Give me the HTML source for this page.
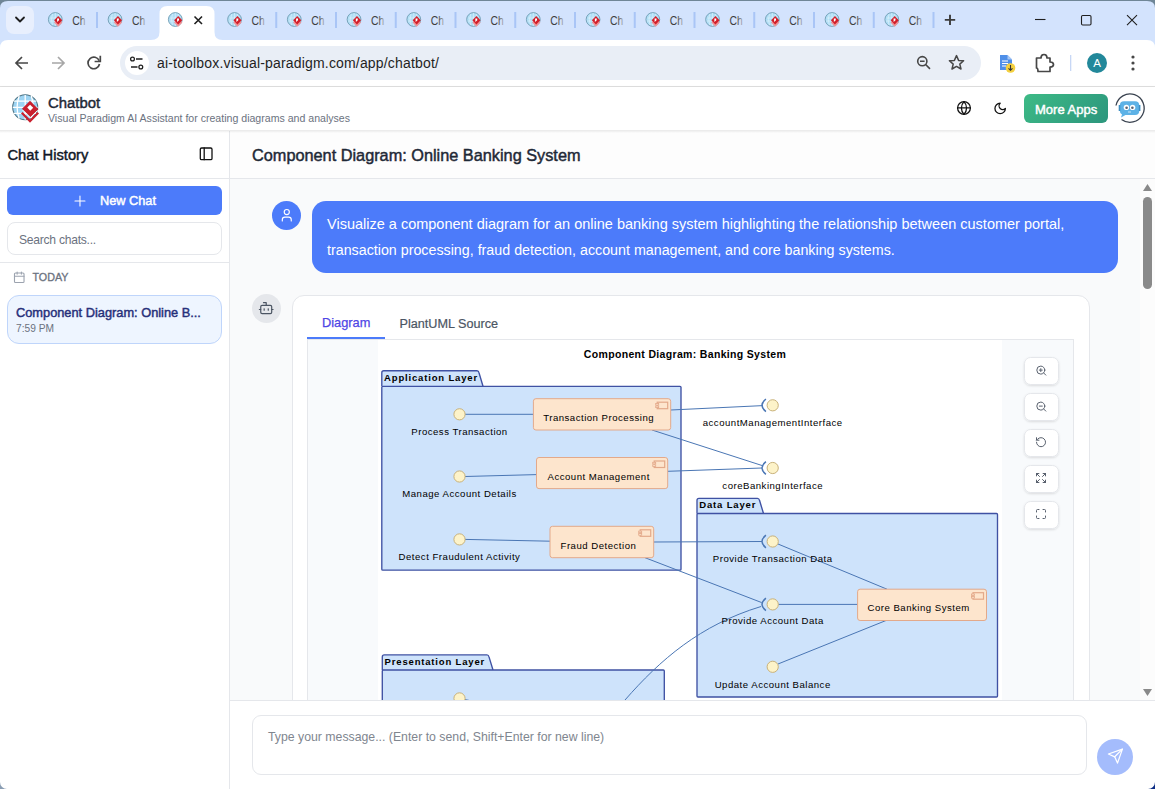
<!DOCTYPE html>
<html><head><meta charset="utf-8">
<style>
*{box-sizing:border-box;margin:0;padding:0}
html,body{width:1155px;height:789px;overflow:hidden;background:#fff;font-family:"Liberation Sans",sans-serif;position:relative}
.a{position:absolute}
.t{position:absolute;white-space:nowrap;line-height:1}
.sb{font-weight:normal;-webkit-text-stroke:0.45px currentColor}
</style></head><body>

<!-- ===== TAB STRIP ===== -->
<!-- CHROME START -->
<svg width="0" height="0" style="position:absolute"><defs>
<symbol id="fav" viewBox="0 0 16 16">
<circle cx="7.3" cy="7.5" r="6.9" fill="#b0def6" stroke="#6f9cb2" stroke-width="0.9"/>
<path d="M2 6 H12.5 M1.5 9 H12 M7.3 1 V14 M4.5 2 Q2.5 7.5 4.5 13 M10 2 Q12 7.5 10 13" stroke="#e3f4fc" stroke-width="0.6" fill="none"/>
<polygon points="10.2,6.4 14.4,10.6 10.2,14.8 6,10.6" fill="#ee9397"/>
<polygon points="10.2,4 14.3,8.2 10.2,12.4 6.1,8.2" fill="#d21f2b"/>
<path d="M9.1 6.6 L11 6.6 L11 8.2 L9.1 10 Z" fill="#fff"/>
</symbol>
<linearGradient id="fadeTxt" x1="0" x2="1" y1="0" y2="0"><stop offset="0.55" stop-color="#3d3d3d"/><stop offset="1" stop-color="#3d3d3d" stop-opacity="0.25"/></linearGradient>
</defs></svg>
<svg class="a" style="left:0;top:0" width="1155" height="40" viewBox="0 0 1155 40">
<rect x="0" y="0" width="1155" height="40" fill="#d3e3fd"/>
<path d="M0 0 H1155 V8 Q1155 1 1147 1 H8 Q0 1 0 8 Z" fill="#6f8697"/>
<rect x="6" y="6" width="28" height="28" rx="8" fill="#e8effd"/>
<path d="M16 17.5 L20 21.5 L24 17.5" fill="none" stroke="#1f1f1f" stroke-width="1.8" stroke-linecap="round" stroke-linejoin="round"/>
<path d="M151 40 Q159.5 40 159.5 32 V14 Q159.5 6 167.5 6 H206.5 Q214.5 6 214.5 14 V32 Q214.5 40 222.5 40 Z" fill="#fff"/>
<g transform="translate(48.00 12)"><circle cx="7.3" cy="7.5" r="6.9" fill="#b0def6" stroke="#6f9cb2" stroke-width="0.9"/>
<path d="M2 6 H12.5 M1.5 9 H12 M7.3 1 V14 M4.5 2 Q2.5 7.5 4.5 13 M10 2 Q12 7.5 10 13" stroke="#e3f4fc" stroke-width="0.6" fill="none"/>
<polygon points="10.2,6.4 14.4,10.6 10.2,14.8 6,10.6" fill="#ee9397"/>
<polygon points="10.2,4 14.3,8.2 10.2,12.4 6.1,8.2" fill="#d21f2b"/>
<path d="M9.1 6.6 L11 6.6 L11 8.2 L9.1 10 Z" fill="#fff"/></g>
<text x="72.30" y="24.8" font-size="12" textLength="13.3" lengthAdjust="spacingAndGlyphs" fill="url(#fadeTxt)" font-family="Liberation Sans">Ch</text>
<rect x="96.00" y="12" width="2" height="16" fill="#a9c5f6"/>
<g transform="translate(107.75 12)"><circle cx="7.3" cy="7.5" r="6.9" fill="#b0def6" stroke="#6f9cb2" stroke-width="0.9"/>
<path d="M2 6 H12.5 M1.5 9 H12 M7.3 1 V14 M4.5 2 Q2.5 7.5 4.5 13 M10 2 Q12 7.5 10 13" stroke="#e3f4fc" stroke-width="0.6" fill="none"/>
<polygon points="10.2,6.4 14.4,10.6 10.2,14.8 6,10.6" fill="#ee9397"/>
<polygon points="10.2,4 14.3,8.2 10.2,12.4 6.1,8.2" fill="#d21f2b"/>
<path d="M9.1 6.6 L11 6.6 L11 8.2 L9.1 10 Z" fill="#fff"/></g>
<text x="132.05" y="24.8" font-size="12" textLength="13.3" lengthAdjust="spacingAndGlyphs" fill="url(#fadeTxt)" font-family="Liberation Sans">Ch</text>
<g transform="translate(168 12)"><circle cx="7.3" cy="7.5" r="6.9" fill="#b0def6" stroke="#6f9cb2" stroke-width="0.9"/>
<path d="M2 6 H12.5 M1.5 9 H12 M7.3 1 V14 M4.5 2 Q2.5 7.5 4.5 13 M10 2 Q12 7.5 10 13" stroke="#e3f4fc" stroke-width="0.6" fill="none"/>
<polygon points="10.2,6.4 14.4,10.6 10.2,14.8 6,10.6" fill="#ee9397"/>
<polygon points="10.2,4 14.3,8.2 10.2,12.4 6.1,8.2" fill="#d21f2b"/>
<path d="M9.1 6.6 L11 6.6 L11 8.2 L9.1 10 Z" fill="#fff"/></g>
<path d="M194.5 16.5 L202 24 M202 16.5 L194.5 24" stroke="#1f1f1f" stroke-width="1.6"/>
<g transform="translate(227.25 12)"><circle cx="7.3" cy="7.5" r="6.9" fill="#b0def6" stroke="#6f9cb2" stroke-width="0.9"/>
<path d="M2 6 H12.5 M1.5 9 H12 M7.3 1 V14 M4.5 2 Q2.5 7.5 4.5 13 M10 2 Q12 7.5 10 13" stroke="#e3f4fc" stroke-width="0.6" fill="none"/>
<polygon points="10.2,6.4 14.4,10.6 10.2,14.8 6,10.6" fill="#ee9397"/>
<polygon points="10.2,4 14.3,8.2 10.2,12.4 6.1,8.2" fill="#d21f2b"/>
<path d="M9.1 6.6 L11 6.6 L11 8.2 L9.1 10 Z" fill="#fff"/></g>
<text x="251.55" y="24.8" font-size="12" textLength="13.3" lengthAdjust="spacingAndGlyphs" fill="url(#fadeTxt)" font-family="Liberation Sans">Ch</text>
<rect x="275.25" y="12" width="2" height="16" fill="#a9c5f6"/>
<g transform="translate(287.00 12)"><circle cx="7.3" cy="7.5" r="6.9" fill="#b0def6" stroke="#6f9cb2" stroke-width="0.9"/>
<path d="M2 6 H12.5 M1.5 9 H12 M7.3 1 V14 M4.5 2 Q2.5 7.5 4.5 13 M10 2 Q12 7.5 10 13" stroke="#e3f4fc" stroke-width="0.6" fill="none"/>
<polygon points="10.2,6.4 14.4,10.6 10.2,14.8 6,10.6" fill="#ee9397"/>
<polygon points="10.2,4 14.3,8.2 10.2,12.4 6.1,8.2" fill="#d21f2b"/>
<path d="M9.1 6.6 L11 6.6 L11 8.2 L9.1 10 Z" fill="#fff"/></g>
<text x="311.30" y="24.8" font-size="12" textLength="13.3" lengthAdjust="spacingAndGlyphs" fill="url(#fadeTxt)" font-family="Liberation Sans">Ch</text>
<rect x="335.00" y="12" width="2" height="16" fill="#a9c5f6"/>
<g transform="translate(346.75 12)"><circle cx="7.3" cy="7.5" r="6.9" fill="#b0def6" stroke="#6f9cb2" stroke-width="0.9"/>
<path d="M2 6 H12.5 M1.5 9 H12 M7.3 1 V14 M4.5 2 Q2.5 7.5 4.5 13 M10 2 Q12 7.5 10 13" stroke="#e3f4fc" stroke-width="0.6" fill="none"/>
<polygon points="10.2,6.4 14.4,10.6 10.2,14.8 6,10.6" fill="#ee9397"/>
<polygon points="10.2,4 14.3,8.2 10.2,12.4 6.1,8.2" fill="#d21f2b"/>
<path d="M9.1 6.6 L11 6.6 L11 8.2 L9.1 10 Z" fill="#fff"/></g>
<text x="371.05" y="24.8" font-size="12" textLength="13.3" lengthAdjust="spacingAndGlyphs" fill="url(#fadeTxt)" font-family="Liberation Sans">Ch</text>
<rect x="394.75" y="12" width="2" height="16" fill="#a9c5f6"/>
<g transform="translate(406.50 12)"><circle cx="7.3" cy="7.5" r="6.9" fill="#b0def6" stroke="#6f9cb2" stroke-width="0.9"/>
<path d="M2 6 H12.5 M1.5 9 H12 M7.3 1 V14 M4.5 2 Q2.5 7.5 4.5 13 M10 2 Q12 7.5 10 13" stroke="#e3f4fc" stroke-width="0.6" fill="none"/>
<polygon points="10.2,6.4 14.4,10.6 10.2,14.8 6,10.6" fill="#ee9397"/>
<polygon points="10.2,4 14.3,8.2 10.2,12.4 6.1,8.2" fill="#d21f2b"/>
<path d="M9.1 6.6 L11 6.6 L11 8.2 L9.1 10 Z" fill="#fff"/></g>
<text x="430.80" y="24.8" font-size="12" textLength="13.3" lengthAdjust="spacingAndGlyphs" fill="url(#fadeTxt)" font-family="Liberation Sans">Ch</text>
<rect x="454.50" y="12" width="2" height="16" fill="#a9c5f6"/>
<g transform="translate(466.25 12)"><circle cx="7.3" cy="7.5" r="6.9" fill="#b0def6" stroke="#6f9cb2" stroke-width="0.9"/>
<path d="M2 6 H12.5 M1.5 9 H12 M7.3 1 V14 M4.5 2 Q2.5 7.5 4.5 13 M10 2 Q12 7.5 10 13" stroke="#e3f4fc" stroke-width="0.6" fill="none"/>
<polygon points="10.2,6.4 14.4,10.6 10.2,14.8 6,10.6" fill="#ee9397"/>
<polygon points="10.2,4 14.3,8.2 10.2,12.4 6.1,8.2" fill="#d21f2b"/>
<path d="M9.1 6.6 L11 6.6 L11 8.2 L9.1 10 Z" fill="#fff"/></g>
<text x="490.55" y="24.8" font-size="12" textLength="13.3" lengthAdjust="spacingAndGlyphs" fill="url(#fadeTxt)" font-family="Liberation Sans">Ch</text>
<rect x="514.25" y="12" width="2" height="16" fill="#a9c5f6"/>
<g transform="translate(526.00 12)"><circle cx="7.3" cy="7.5" r="6.9" fill="#b0def6" stroke="#6f9cb2" stroke-width="0.9"/>
<path d="M2 6 H12.5 M1.5 9 H12 M7.3 1 V14 M4.5 2 Q2.5 7.5 4.5 13 M10 2 Q12 7.5 10 13" stroke="#e3f4fc" stroke-width="0.6" fill="none"/>
<polygon points="10.2,6.4 14.4,10.6 10.2,14.8 6,10.6" fill="#ee9397"/>
<polygon points="10.2,4 14.3,8.2 10.2,12.4 6.1,8.2" fill="#d21f2b"/>
<path d="M9.1 6.6 L11 6.6 L11 8.2 L9.1 10 Z" fill="#fff"/></g>
<text x="550.30" y="24.8" font-size="12" textLength="13.3" lengthAdjust="spacingAndGlyphs" fill="url(#fadeTxt)" font-family="Liberation Sans">Ch</text>
<rect x="574.00" y="12" width="2" height="16" fill="#a9c5f6"/>
<g transform="translate(585.75 12)"><circle cx="7.3" cy="7.5" r="6.9" fill="#b0def6" stroke="#6f9cb2" stroke-width="0.9"/>
<path d="M2 6 H12.5 M1.5 9 H12 M7.3 1 V14 M4.5 2 Q2.5 7.5 4.5 13 M10 2 Q12 7.5 10 13" stroke="#e3f4fc" stroke-width="0.6" fill="none"/>
<polygon points="10.2,6.4 14.4,10.6 10.2,14.8 6,10.6" fill="#ee9397"/>
<polygon points="10.2,4 14.3,8.2 10.2,12.4 6.1,8.2" fill="#d21f2b"/>
<path d="M9.1 6.6 L11 6.6 L11 8.2 L9.1 10 Z" fill="#fff"/></g>
<text x="610.05" y="24.8" font-size="12" textLength="13.3" lengthAdjust="spacingAndGlyphs" fill="url(#fadeTxt)" font-family="Liberation Sans">Ch</text>
<rect x="633.75" y="12" width="2" height="16" fill="#a9c5f6"/>
<g transform="translate(645.50 12)"><circle cx="7.3" cy="7.5" r="6.9" fill="#b0def6" stroke="#6f9cb2" stroke-width="0.9"/>
<path d="M2 6 H12.5 M1.5 9 H12 M7.3 1 V14 M4.5 2 Q2.5 7.5 4.5 13 M10 2 Q12 7.5 10 13" stroke="#e3f4fc" stroke-width="0.6" fill="none"/>
<polygon points="10.2,6.4 14.4,10.6 10.2,14.8 6,10.6" fill="#ee9397"/>
<polygon points="10.2,4 14.3,8.2 10.2,12.4 6.1,8.2" fill="#d21f2b"/>
<path d="M9.1 6.6 L11 6.6 L11 8.2 L9.1 10 Z" fill="#fff"/></g>
<text x="669.80" y="24.8" font-size="12" textLength="13.3" lengthAdjust="spacingAndGlyphs" fill="url(#fadeTxt)" font-family="Liberation Sans">Ch</text>
<rect x="693.50" y="12" width="2" height="16" fill="#a9c5f6"/>
<g transform="translate(705.25 12)"><circle cx="7.3" cy="7.5" r="6.9" fill="#b0def6" stroke="#6f9cb2" stroke-width="0.9"/>
<path d="M2 6 H12.5 M1.5 9 H12 M7.3 1 V14 M4.5 2 Q2.5 7.5 4.5 13 M10 2 Q12 7.5 10 13" stroke="#e3f4fc" stroke-width="0.6" fill="none"/>
<polygon points="10.2,6.4 14.4,10.6 10.2,14.8 6,10.6" fill="#ee9397"/>
<polygon points="10.2,4 14.3,8.2 10.2,12.4 6.1,8.2" fill="#d21f2b"/>
<path d="M9.1 6.6 L11 6.6 L11 8.2 L9.1 10 Z" fill="#fff"/></g>
<text x="729.55" y="24.8" font-size="12" textLength="13.3" lengthAdjust="spacingAndGlyphs" fill="url(#fadeTxt)" font-family="Liberation Sans">Ch</text>
<rect x="753.25" y="12" width="2" height="16" fill="#a9c5f6"/>
<g transform="translate(765.00 12)"><circle cx="7.3" cy="7.5" r="6.9" fill="#b0def6" stroke="#6f9cb2" stroke-width="0.9"/>
<path d="M2 6 H12.5 M1.5 9 H12 M7.3 1 V14 M4.5 2 Q2.5 7.5 4.5 13 M10 2 Q12 7.5 10 13" stroke="#e3f4fc" stroke-width="0.6" fill="none"/>
<polygon points="10.2,6.4 14.4,10.6 10.2,14.8 6,10.6" fill="#ee9397"/>
<polygon points="10.2,4 14.3,8.2 10.2,12.4 6.1,8.2" fill="#d21f2b"/>
<path d="M9.1 6.6 L11 6.6 L11 8.2 L9.1 10 Z" fill="#fff"/></g>
<text x="789.30" y="24.8" font-size="12" textLength="13.3" lengthAdjust="spacingAndGlyphs" fill="url(#fadeTxt)" font-family="Liberation Sans">Ch</text>
<rect x="813.00" y="12" width="2" height="16" fill="#a9c5f6"/>
<g transform="translate(824.75 12)"><circle cx="7.3" cy="7.5" r="6.9" fill="#b0def6" stroke="#6f9cb2" stroke-width="0.9"/>
<path d="M2 6 H12.5 M1.5 9 H12 M7.3 1 V14 M4.5 2 Q2.5 7.5 4.5 13 M10 2 Q12 7.5 10 13" stroke="#e3f4fc" stroke-width="0.6" fill="none"/>
<polygon points="10.2,6.4 14.4,10.6 10.2,14.8 6,10.6" fill="#ee9397"/>
<polygon points="10.2,4 14.3,8.2 10.2,12.4 6.1,8.2" fill="#d21f2b"/>
<path d="M9.1 6.6 L11 6.6 L11 8.2 L9.1 10 Z" fill="#fff"/></g>
<text x="849.05" y="24.8" font-size="12" textLength="13.3" lengthAdjust="spacingAndGlyphs" fill="url(#fadeTxt)" font-family="Liberation Sans">Ch</text>
<rect x="872.75" y="12" width="2" height="16" fill="#a9c5f6"/>
<g transform="translate(884.50 12)"><circle cx="7.3" cy="7.5" r="6.9" fill="#b0def6" stroke="#6f9cb2" stroke-width="0.9"/>
<path d="M2 6 H12.5 M1.5 9 H12 M7.3 1 V14 M4.5 2 Q2.5 7.5 4.5 13 M10 2 Q12 7.5 10 13" stroke="#e3f4fc" stroke-width="0.6" fill="none"/>
<polygon points="10.2,6.4 14.4,10.6 10.2,14.8 6,10.6" fill="#ee9397"/>
<polygon points="10.2,4 14.3,8.2 10.2,12.4 6.1,8.2" fill="#d21f2b"/>
<path d="M9.1 6.6 L11 6.6 L11 8.2 L9.1 10 Z" fill="#fff"/></g>
<text x="908.80" y="24.8" font-size="12" textLength="13.3" lengthAdjust="spacingAndGlyphs" fill="url(#fadeTxt)" font-family="Liberation Sans">Ch</text>
<rect x="932.50" y="12" width="2" height="16" fill="#a9c5f6"/>
<path d="M950 14.8 V25 M944.8 19.9 H955.2" stroke="#3c3c3c" stroke-width="1.9"/>
<path d="M1035 19.5 H1045.5" stroke="#1f1f1f" stroke-width="1.1"/>
<rect x="1081.5" y="15.5" width="9.5" height="9.5" rx="1.2" fill="none" stroke="#1f1f1f" stroke-width="1.1"/>
<path d="M1127 15.2 L1137 25.2 M1137 15.2 L1127 25.2" stroke="#1f1f1f" stroke-width="1.1"/>
</svg>
<svg class="a" style="left:0;top:40px" width="1155" height="47" viewBox="0 40 1155 47">
<rect x="0" y="40" width="1155" height="10" fill="#d3e3fd"/>
<path d="M0 87 V48 Q0 40 8 40 H1147 Q1155 40 1155 48 V87 Z" fill="#fff"/>
<rect x="0" y="86" width="1155" height="1" fill="#e1e1e1"/>
<path d="M28 63 H16.5 M22 57 L16 63 L22 69" fill="none" stroke="#474747" stroke-width="1.7"/>
<path d="M52 63 H63.5 M58 57 L64 63 L58 69" fill="none" stroke="#a7a7a7" stroke-width="1.7"/>
<path d="M99.2 60.8 A5.8 5.8 0 1 0 99.5 64" fill="none" stroke="#474747" stroke-width="1.7"/><path d="M100.3 55.8 V61.5 H94.6" fill="none" stroke="#474747" stroke-width="1.7"/>
<rect x="120" y="46" width="861" height="34" rx="17" fill="#e9eef6"/>
<circle cx="137" cy="63" r="12" fill="#fff"/>
<circle cx="132.5" cy="59" r="1.9" fill="none" stroke="#1f1f1f" stroke-width="1.3"/><path d="M136 59 H142.5 M131 67 H137.5" stroke="#1f1f1f" stroke-width="1.4"/><circle cx="140.8" cy="67" r="1.9" fill="none" stroke="#1f1f1f" stroke-width="1.3"/>
<circle cx="922.3" cy="61.2" r="4.6" fill="none" stroke="#474747" stroke-width="1.6"/><path d="M920 61.2 H924.6 M925.6 64.5 L930 68.9" stroke="#474747" stroke-width="1.6"/>
<path d="M956.5 55.6 L958.6 60.4 L963.6 60.8 L959.8 64.1 L961 69 L956.5 66.4 L952 69 L953.2 64.1 L949.4 60.8 L954.4 60.4 Z" fill="none" stroke="#474747" stroke-width="1.5" stroke-linejoin="round"/>
<path d="M1000 55 H1007.5 L1012 59.5 V70 H1000 Z" fill="#4f8fe8"/><path d="M1007.5 55 V59.5 H1012 Z" fill="#a8c8f5"/><path d="M1002 61 H1008 M1002 63.5 H1008 M1002 66 H1006" stroke="#fff" stroke-width="1"/><circle cx="1010.5" cy="68" r="4.8" fill="#f4d03f"/><path d="M1010.5 65 V70 M1008.5 68.3 L1010.5 70.3 L1012.5 68.3" fill="none" stroke="#333" stroke-width="1.1"/>
<path d="M1036.5 58 H1041 Q1041 54.5 1044 54.5 Q1047 54.5 1047 58 H1050 V62 Q1053.5 62 1053.5 64.5 Q1053.5 67 1050 67 V71.5 H1038 Q1038 68 1036.5 68 Z" fill="none" stroke="#474747" stroke-width="1.7" stroke-linejoin="round"/>
<rect x="1070" y="55" width="1.3" height="16" fill="#c7d7f5"/>
<circle cx="1097" cy="63" r="10" fill="#22889a"/><text x="1097" y="67.3" font-size="11.5" fill="#fff" text-anchor="middle" font-family="Liberation Sans">A</text>
<circle cx="1133" cy="57" r="1.6" fill="#474747"/><circle cx="1133" cy="63" r="1.6" fill="#474747"/><circle cx="1133" cy="69" r="1.6" fill="#474747"/>
</svg>
<!-- CHROME END -->
<div class="t" style="left:157px;top:56px;font-size:14px;letter-spacing:0.17px;color:#1f1f1f">ai-toolbox.visual-paradigm.com/app/chatbot/</div>

<!-- ===== APP HEADER ===== -->
<div class="a" style="left:0;top:87px;width:1155px;height:44px;background:#fff;box-shadow:0 1px 3px rgba(0,0,0,0.12)"></div>
<div class="t sb" style="left:48px;top:95.5px;font-size:14.9px;color:#1f2937">Chatbot</div>
<div class="t" style="left:48px;top:113px;font-size:10.58px;color:#6b7280">Visual Paradigm AI Assistant for creating diagrams and analyses</div>
<div class="a" style="left:1024px;top:94px;width:84px;height:29px;border-radius:6px;background:linear-gradient(135deg,#3dba86,#2c967d)"></div>
<div class="t sb" style="left:1035px;top:102.5px;font-size:13px;color:#fff">More Apps</div>

<!-- ===== SIDEBAR ===== -->
<div class="a" style="left:0;top:131px;width:230px;height:658px;background:#fff;border-right:1px solid #e5e7eb"></div>
<div class="a" style="left:0;top:178px;width:229px;height:1px;background:#e5e7eb"></div>
<div class="t sb" style="left:7.5px;top:147.5px;font-size:14.7px;color:#111827">Chat History</div>
<div class="a" style="left:7px;top:186px;width:215px;height:29px;border-radius:6px;background:#4c7bfa"></div>
<div class="t sb" style="left:100px;top:195px;font-size:12.75px;color:#fff">New Chat</div>
<div class="a" style="left:7px;top:222px;width:215px;height:33px;border-radius:8px;border:1px solid #e5e7eb;background:#fff"></div>
<div class="t" style="left:19px;top:233.6px;font-size:12.1px;letter-spacing:-0.25px;color:#6b7280">Search chats...</div>
<div class="a" style="left:0;top:262px;width:229px;height:1px;background:#e5e7eb"></div>
<div class="t sb" style="left:32.5px;top:271.5px;font-size:10.75px;color:#6b7280;-webkit-text-stroke-width:0.3px">TODAY</div>
<div class="a" style="left:7px;top:295px;width:215px;height:49px;border-radius:12px;border:1px solid #bfd5fb;background:#eef5ff"></div>
<div class="t sb" style="left:16px;top:307px;font-size:12.8px;color:#27307a">Component Diagram: Online B...</div>
<div class="t" style="left:16px;top:323.5px;font-size:10.2px;color:#6b7280">7:59 PM</div>

<!-- ===== MAIN ===== -->
<div class="a" style="left:230px;top:131px;width:925px;height:48px;background:#fdfdfd;border-bottom:1px solid #e5e7eb"></div>
<div class="t sb" style="left:252px;top:147px;font-size:16.3px;color:#1f2937">Component Diagram: Online Banking System</div>
<div class="a" style="left:230px;top:179px;width:925px;height:521px;background:#f9fafb"></div>

<!-- user message -->
<div class="a" style="left:272px;top:201px;width:29px;height:29px;border-radius:50%;background:#4c7bfa"></div>
<div class="a" style="left:312px;top:201px;width:806px;height:72px;border-radius:14px;background:#4c7bfa"></div>
<div class="t" style="left:327px;top:217px;font-size:14.5px;color:#fff">Visualize a component diagram for an online banking system highlighting the relationship between customer portal,</div>
<div class="t" style="left:327px;top:243px;font-size:14.27px;color:#fff">transaction processing, fraud detection, account management, and core banking systems.</div>

<!-- bot -->
<div class="a" style="left:252px;top:294px;width:29px;height:29px;border-radius:50%;background:#e5e7eb"></div>
<div class="a" style="left:292px;top:295px;width:798px;height:420px;border-radius:12px;border:1px solid #e5e7eb;background:#fff"></div>
<div class="t" style="left:322px;top:316.5px;font-size:12.8px;color:#4f46e5;-webkit-text-stroke:0.25px #4f46e5">Diagram</div>
<div class="t" style="left:399.5px;top:317.5px;font-size:12.65px;color:#4b5563;-webkit-text-stroke:0.2px #4b5563">PlantUML Source</div>
<div class="a" style="left:307px;top:339px;width:767px;height:1px;background:#e5e7eb"></div>
<div class="a" style="left:307px;top:337px;width:78px;height:2px;background:#4c7bfa"></div>
<div class="a" style="left:307px;top:340px;width:767px;height:380px;background:#f8fafc;border-left:1px solid #e5e7eb;border-right:1px solid #e5e7eb"></div>
<div class="a" style="left:378px;top:340px;width:624px;height:380px;background:#fff"></div>

<!-- DIAGRAM START -->
<svg class="a" style="left:308px;top:340px" width="765" height="360" viewBox="308 340 765 360" font-family="Liberation Sans, sans-serif">
<text x="685" y="357.7" font-size="10.5" font-weight="bold" letter-spacing="0.33" text-anchor="middle" fill="#000">Component Diagram: Banking System</text>
<path d="M381.8 386.3 L381.8 372.7 Q381.8 370.7 383.8 370.7 L477 370.7 Q478.5 370.7 479 372.7 L483 386.3" fill="#cee3fb" stroke="#3f51a3" stroke-width="1.35"/>
<rect x="381.8" y="386.3" width="299.2" height="183.90000000000003" rx="1" fill="#cee3fb" stroke="#3f51a3" stroke-width="1.35"/>
<text x="384.1" y="380.8" font-size="9.5" font-weight="bold" letter-spacing="0.83" text-anchor="start" fill="#000">Application Layer</text>
<path d="M697 513.5 L697 500.3 Q697 498.3 699 498.3 L757.5 498.3 Q759.0 498.3 759.5 500.3 L763.5 513.5" fill="#cee3fb" stroke="#3f51a3" stroke-width="1.35"/>
<rect x="697" y="513.5" width="300.5" height="183.5" rx="1" fill="#cee3fb" stroke="#3f51a3" stroke-width="1.35"/>
<text x="699.3" y="508.40000000000003" font-size="9.5" font-weight="bold" letter-spacing="0.83" text-anchor="start" fill="#000">Data Layer</text>
<path d="M382.3 670 L382.3 656.9 Q382.3 654.9 384.3 654.9 L487 654.9 Q488.5 654.9 489 656.9 L493 670" fill="#cee3fb" stroke="#3f51a3" stroke-width="1.35"/>
<rect x="382.3" y="670" width="281.99999999999994" height="90" rx="1" fill="#cee3fb" stroke="#3f51a3" stroke-width="1.35"/>
<text x="384.6" y="665.0" font-size="9.5" font-weight="bold" letter-spacing="0.83" text-anchor="start" fill="#000">Presentation Layer</text>
<line x1="465" y1="414.3" x2="533.4" y2="414.3" stroke="#4a76b4" stroke-width="1"/>
<line x1="465" y1="476.5" x2="536.5" y2="474.6" stroke="#4a76b4" stroke-width="1"/>
<line x1="465" y1="539.4" x2="550" y2="541.2" stroke="#4a76b4" stroke-width="1"/>
<line x1="670.7" y1="410" x2="763" y2="405.6" stroke="#4a76b4" stroke-width="1"/>
<line x1="652" y1="430" x2="762" y2="465.5" stroke="#4a76b4" stroke-width="1"/>
<line x1="667.7" y1="471.3" x2="762" y2="468" stroke="#4a76b4" stroke-width="1"/>
<line x1="653.7" y1="542" x2="762" y2="541.5" stroke="#4a76b4" stroke-width="1"/>
<line x1="645" y1="557.7" x2="761.5" y2="602.5" stroke="#4a76b4" stroke-width="1"/>
<path d="M625 700 C660 660 700 625 761 606.5" fill="none" stroke="#4a76b4" stroke-width="1"/>
<line x1="778" y1="544" x2="887" y2="589.2" stroke="#4a76b4" stroke-width="1"/>
<line x1="778.4" y1="604.4" x2="857.6" y2="604.4" stroke="#4a76b4" stroke-width="1"/>
<line x1="778" y1="664" x2="886" y2="620.5" stroke="#4a76b4" stroke-width="1"/>
<line x1="465" y1="699.6" x2="472" y2="701" stroke="#4a76b4" stroke-width="1"/>
<rect x="533.4" y="398.7" width="137.30000000000007" height="31.30000000000001" rx="2.5" fill="#fde5cd" stroke="#e3a98a" stroke-width="1"/>
<rect x="657.2" y="402.2" width="10.5" height="6.5" fill="none" stroke="#e3a98a" stroke-width="1.2"/>
<rect x="655.7" y="403.5" width="3" height="1.6" fill="#fde5cd" stroke="#e3a98a" stroke-width="0.8"/>
<rect x="655.7" y="406.0" width="3" height="1.6" fill="#fde5cd" stroke="#e3a98a" stroke-width="0.8"/>
<text x="598.65" y="421" font-size="9.6" letter-spacing="0.5" text-anchor="middle" fill="#000">Transaction Processing</text>
<rect x="536.5" y="457.5" width="131.20000000000005" height="31.100000000000023" rx="2.5" fill="#fde5cd" stroke="#e3a98a" stroke-width="1"/>
<rect x="654.2" y="461.0" width="10.5" height="6.5" fill="none" stroke="#e3a98a" stroke-width="1.2"/>
<rect x="652.7" y="462.3" width="3" height="1.6" fill="#fde5cd" stroke="#e3a98a" stroke-width="0.8"/>
<rect x="652.7" y="464.8" width="3" height="1.6" fill="#fde5cd" stroke="#e3a98a" stroke-width="0.8"/>
<text x="598.7" y="480" font-size="9.6" letter-spacing="0.5" text-anchor="middle" fill="#000">Account Management</text>
<rect x="550" y="526.3" width="103.70000000000005" height="31.40000000000009" rx="2.5" fill="#fde5cd" stroke="#e3a98a" stroke-width="1"/>
<rect x="640.2" y="529.8" width="10.5" height="6.5" fill="none" stroke="#e3a98a" stroke-width="1.2"/>
<rect x="638.7" y="531.0999999999999" width="3" height="1.6" fill="#fde5cd" stroke="#e3a98a" stroke-width="0.8"/>
<rect x="638.7" y="533.5999999999999" width="3" height="1.6" fill="#fde5cd" stroke="#e3a98a" stroke-width="0.8"/>
<text x="598.45" y="549.2" font-size="9.6" letter-spacing="0.5" text-anchor="middle" fill="#000">Fraud Detection</text>
<rect x="857.6" y="589.2" width="128.89999999999998" height="31.299999999999955" rx="2.5" fill="#fde5cd" stroke="#e3a98a" stroke-width="1"/>
<rect x="973.0" y="592.7" width="10.5" height="6.5" fill="none" stroke="#e3a98a" stroke-width="1.2"/>
<rect x="971.5" y="594.0" width="3" height="1.6" fill="#fde5cd" stroke="#e3a98a" stroke-width="0.8"/>
<rect x="971.5" y="596.5" width="3" height="1.6" fill="#fde5cd" stroke="#e3a98a" stroke-width="0.8"/>
<text x="918.65" y="610.8" font-size="9.6" letter-spacing="0.5" text-anchor="middle" fill="#000">Core Banking System</text>
<circle cx="459.5" cy="414.3" r="5.6" fill="#fdf3c9" stroke="#c9b27a" stroke-width="1"/>
<text x="459.5" y="435.2" font-size="9.6" letter-spacing="0.5" text-anchor="middle" fill="#000">Process Transaction</text>
<circle cx="459.5" cy="476.5" r="5.6" fill="#fdf3c9" stroke="#c9b27a" stroke-width="1"/>
<text x="459.5" y="496.6" font-size="9.6" letter-spacing="0.5" text-anchor="middle" fill="#000">Manage Account Details</text>
<circle cx="459.5" cy="539.4" r="5.6" fill="#fdf3c9" stroke="#c9b27a" stroke-width="1"/>
<text x="459.5" y="560.2" font-size="9.6" letter-spacing="0.5" text-anchor="middle" fill="#000">Detect Fraudulent Activity</text>
<circle cx="459.5" cy="698.4" r="5.6" fill="#fdf3c9" stroke="#c9b27a" stroke-width="1"/>
<circle cx="772.7" cy="405.3" r="5.6" fill="#fdf3c9" stroke="#c9b27a" stroke-width="1"/>
<path d="M765.9000000000001 399.0 Q758.1 405.3 765.9000000000001 411.6" fill="none" stroke="#4a76b4" stroke-width="1.5"/>
<text x="772.7" y="426.3" font-size="9.6" letter-spacing="0.5" text-anchor="middle" fill="#000">accountManagementInterface</text>
<circle cx="772.7" cy="468" r="5.6" fill="#fdf3c9" stroke="#c9b27a" stroke-width="1"/>
<path d="M765.9000000000001 461.7 Q758.1 468 765.9000000000001 474.3" fill="none" stroke="#4a76b4" stroke-width="1.5"/>
<text x="772.7" y="489" font-size="9.6" letter-spacing="0.5" text-anchor="middle" fill="#000">coreBankingInterface</text>
<circle cx="772.7" cy="541.5" r="5.6" fill="#fdf3c9" stroke="#c9b27a" stroke-width="1"/>
<path d="M765.9000000000001 535.2 Q758.1 541.5 765.9000000000001 547.8" fill="none" stroke="#4a76b4" stroke-width="1.5"/>
<text x="772.7" y="561.5" font-size="9.6" letter-spacing="0.5" text-anchor="middle" fill="#000">Provide Transaction Data</text>
<circle cx="772.7" cy="604.4" r="5.6" fill="#fdf3c9" stroke="#c9b27a" stroke-width="1"/>
<path d="M765.9000000000001 598.1 Q758.1 604.4 765.9000000000001 610.6999999999999" fill="none" stroke="#4a76b4" stroke-width="1.5"/>
<text x="772.7" y="624.4" font-size="9.6" letter-spacing="0.5" text-anchor="middle" fill="#000">Provide Account Data</text>
<circle cx="772.7" cy="666.8" r="5.6" fill="#fdf3c9" stroke="#c9b27a" stroke-width="1"/>
<text x="772.7" y="687.6" font-size="9.6" letter-spacing="0.5" text-anchor="middle" fill="#000">Update Account Balance</text>
</svg>
<!-- DIAGRAM END -->

<!-- input area -->
<div class="a" style="left:230px;top:700px;width:925px;height:89px;background:#fff;border-top:1px solid #e5e7eb"></div>
<div class="a" style="left:252px;top:715px;width:835px;height:60px;border-radius:9px;border:1px solid #e5e7eb;background:#fff"></div>
<div class="t" style="left:268px;top:731.2px;font-size:12.29px;color:#80868f">Type your message... (Enter to send, Shift+Enter for new line)</div>
<div class="a" style="left:1097px;top:739px;width:36px;height:36px;border-radius:18px;background:#a4bcfc"></div>

<div class="a" style="left:0;top:130px;width:1155px;height:3px;background:linear-gradient(rgba(0,0,0,0.09),rgba(0,0,0,0))"></div>
<!-- ICONS START -->
<svg class="a" style="left:8px;top:90px" width="36" height="36" viewBox="8 90 36 36">
<circle cx="25.2" cy="107.3" r="12.5" fill="#9dd4f3" stroke="#507585" stroke-width="1.1"/>
<path d="M14 101.2 H36.4 M12.8 107.3 H37.6 M14 113.4 H36.4 M25.2 95 V119.8 M19.2 95.8 Q15 107.3 19.2 118.8 M31.2 95.8 Q35.4 107.3 31.2 118.8" fill="none" stroke="#fff" stroke-width="1.3"/>
<path d="M30 100.8 L38.4 109.2 L30.5 117.1 L22 108.7 Z" fill="#c9202e"/>
<path d="M27.2 107.6 L30.1 104.7 L33.2 107.8 L30.3 110.7 Z" fill="#fff"/>
<path d="M21.8 112.8 L30 121 L38.2 112.8" fill="none" stroke="#c9202e" stroke-width="2.3"/>
<path d="M22.5 110 L30.3 117.8 L37.8 110.3" fill="none" stroke="#fff" stroke-width="1"/>
</svg>
<svg class="a" style="left:950px;top:94px" width="60" height="28" viewBox="950 94 60 28">
<g transform="translate(956.3 100.3) scale(0.64)" fill="none" stroke="#111" stroke-width="2" stroke-linecap="round" stroke-linejoin="round"><circle cx="12" cy="12" r="10"/><path d="M12 2a14.5 14.5 0 0 0 0 20 14.5 14.5 0 0 0 0-20"/><path d="M2 12h20"/></g>
<g transform="translate(993.2 101.5) scale(0.58)" fill="none" stroke="#111" stroke-width="2.2" stroke-linecap="round" stroke-linejoin="round"><path d="M12 3a6 6 0 0 0 9 9 9 9 0 1 1-9-9Z"/></g>
</svg>
<svg class="a" style="left:1112px;top:91px" width="36" height="36" viewBox="1112 91 36 36">
<path d="M1116 105.5 A14.2 14.2 0 1 1 1121.5 119.5" fill="none" stroke="#3a4350" stroke-width="1.3"/>
<path d="M1124 101.2 H1135 Q1139.3 101.2 1139.3 105.5 V110.5 Q1139.3 115 1135 115 H1125.5 L1121 117.5 L1122 114.5 Q1119.8 113.5 1119.8 110.5 V105.5 Q1119.8 101.2 1124 101.2 Z" fill="#5db2e6"/>
<path d="M1119.5 105 V111 M1139.6 105 V111" stroke="#3d8fc4" stroke-width="1.6"/><circle cx="1126.4" cy="107.4" r="2.7" fill="#fff"/><circle cx="1132.6" cy="107.4" r="2.7" fill="#fff"/>
<circle cx="1126.6" cy="107.7" r="1.3" fill="#5a6270"/><circle cx="1132.4" cy="107.7" r="1.3" fill="#5a6270"/>
<path d="M1128 112 H1131" stroke="#cfe8f8" stroke-width="1"/>
</svg>
<svg class="a" style="left:0;top:140px" width="230" height="160" viewBox="0 140 230 160">
<g transform="translate(198.35 146.05) scale(0.65)" fill="none" stroke="#111" stroke-width="2" stroke-linecap="round" stroke-linejoin="round"><rect width="18" height="18" x="3" y="3" rx="2"/><path d="M9 3v18"/></g>
<g transform="translate(71.4 192.4) scale(0.714)" fill="none" stroke="#fff" stroke-width="1.5" stroke-linecap="round"><path d="M5 12h14"/><path d="M12 5v14"/></g>
<g transform="translate(12.9 270.9) scale(0.53)" fill="none" stroke="#9ca3af" stroke-width="2.1" stroke-linecap="round" stroke-linejoin="round"><path d="M8 2v4"/><path d="M16 2v4"/><rect width="18" height="18" x="3" y="4" rx="2"/><path d="M3 10h18"/></g>
</svg>
<svg class="a" style="left:250px;top:195px" width="60" height="135" viewBox="250 195 60 135">
<g transform="translate(279.1 207.6) scale(0.64)" fill="none" stroke="#fff" stroke-width="1.8" stroke-linecap="round" stroke-linejoin="round"><path d="M19 21v-2a4 4 0 0 0-4-4H9a4 4 0 0 0-4 4v2"/><circle cx="12" cy="7" r="4"/></g>
<g transform="translate(258 299.9) scale(0.685)" fill="none" stroke="#4b5563" stroke-width="1.75" stroke-linecap="round" stroke-linejoin="round"><path d="M12 8V4H8"/><rect width="16" height="12" x="4" y="8" rx="2"/><path d="M2 14h2"/><path d="M20 14h2"/><path d="M15 13v2"/><path d="M9 13v2"/></g>
</svg>
<svg class="a" style="left:1018px;top:350px" width="50" height="186" viewBox="1018 350 50 186">
<defs><filter id="sh" x="-20%" y="-20%" width="140%" height="150%"><feDropShadow dx="0" dy="1" stdDeviation="0.8" flood-color="#000" flood-opacity="0.12"/></filter></defs>
<rect x="1024.5" y="357.5" width="34" height="27" rx="6" fill="#fff" stroke="#e5e7eb" stroke-width="1" filter="url(#sh)"/>
<rect x="1024.5" y="393.5" width="34" height="27" rx="6" fill="#fff" stroke="#e5e7eb" stroke-width="1" filter="url(#sh)"/>
<rect x="1024.5" y="429.5" width="34" height="27" rx="6" fill="#fff" stroke="#e5e7eb" stroke-width="1" filter="url(#sh)"/>
<rect x="1024.5" y="465.5" width="34" height="27" rx="6" fill="#fff" stroke="#e5e7eb" stroke-width="1" filter="url(#sh)"/>
<rect x="1024.5" y="501.5" width="34" height="27" rx="6" fill="#fff" stroke="#e5e7eb" stroke-width="1" filter="url(#sh)"/>
<g transform="translate(1035.3 364.6) scale(0.5)" fill="none" stroke="#59616e" stroke-width="2" stroke-linecap="round" stroke-linejoin="round"><circle cx="11" cy="11" r="8"/><path d="M21 21l-4.35-4.35"/><path d="M11 8v6"/><path d="M8 11h6"/></g>
<g transform="translate(1035.3 400.6) scale(0.5)" fill="none" stroke="#59616e" stroke-width="2" stroke-linecap="round" stroke-linejoin="round"><circle cx="11" cy="11" r="8"/><path d="M21 21l-4.35-4.35"/><path d="M8 11h6"/></g>
<g transform="translate(1035 436.2) scale(0.5)" fill="none" stroke="#59616e" stroke-width="2" stroke-linecap="round" stroke-linejoin="round"><path d="M3 12a9 9 0 1 0 9-9 9.75 9.75 0 0 0-6.74 2.74L3 8"/><path d="M3 3v5h5"/></g>
<g transform="translate(1035 472) scale(0.5)" fill="none" stroke="#59616e" stroke-width="2" stroke-linecap="round" stroke-linejoin="round"><path d="m21 21-6-6m6 6v-4.8m0 4.8h-4.8"/><path d="M3 16.2V21m0 0h4.8M3 21l6-6"/><path d="M21 7.8V3m0 0h-4.8M21 3l-6 6"/><path d="M3 7.8V3m0 0h4.8M3 3l6 6"/></g>
<g transform="translate(1035 508) scale(0.5)" fill="none" stroke="#59616e" stroke-width="2" stroke-linecap="round" stroke-linejoin="round"><path d="M8 3H5a2 2 0 0 0-2 2v3"/><path d="M21 8V5a2 2 0 0 0-2-2h-3"/><path d="M3 16v3a2 2 0 0 0 2 2h3"/><path d="M16 21h3a2 2 0 0 0 2-2v-3"/></g>
</svg>
<svg class="a" style="left:1140px;top:179px" width="15" height="521" viewBox="1140 179 15 521">
<rect x="1140" y="179" width="15" height="521" fill="#fcfcfc"/>
<path d="M1143 191 L1147.5 184 L1152 191 Z" fill="#8a8a8a"/>
<rect x="1143" y="197" width="9" height="92" rx="4.5" fill="#8a8a8a"/>
<path d="M1143 689 L1147.5 696 L1152 689 Z" fill="#8a8a8a"/>
</svg>
<svg class="a" style="left:1140px;top:775px" width="15" height="14" viewBox="1140 775 15 14"><path d="M1148 789 H1155 V782 A7 7 0 0 1 1148 789 Z" fill="#0c2d85"/></svg>
<svg class="a" style="left:0;top:775px" width="15" height="14" viewBox="0 775 15 14"><path d="M0 782 V789 H7 A7 7 0 0 1 0 782 Z" fill="#8a9db3"/></svg>
<svg class="a" style="left:1100px;top:742px" width="30" height="30" viewBox="1100 742 30 30">
<g transform="translate(1107 747.7) scale(0.7)" fill="none" stroke="#fff" stroke-width="1.8" stroke-linecap="round" stroke-linejoin="round"><path d="m22 2-7 20-4-9-9-4Z"/><path d="M22 2 11 13"/></g>
</svg>
<!-- ICONS END -->
</body></html>
